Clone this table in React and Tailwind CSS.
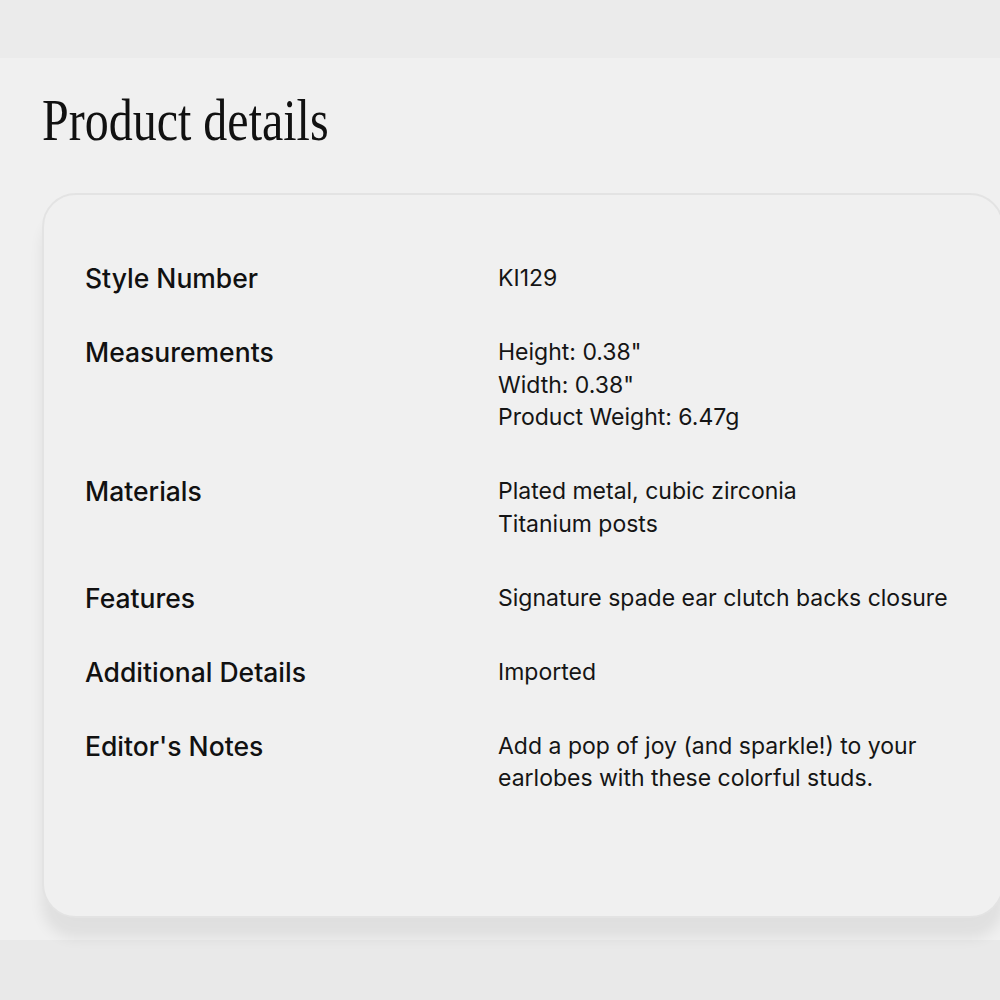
import React from 'react'

const rows = [
  { label: 'Style Number', value: ['KI129'] },
  { label: 'Measurements', value: ['Height: 0.38"', 'Width: 0.38"', 'Product Weight: 6.47g'] },
  { label: 'Materials', value: ['Plated metal, cubic zirconia', 'Titanium posts'] },
  { label: 'Features', value: ['Signature spade ear clutch backs closure'] },
  { label: 'Additional Details', value: ['Imported'] },
  { label: "Editor's Notes", value: ['Add a pop of joy (and sparkle!) to your', 'earlobes with these colorful studs.'] },
]

const App = () => {
  return (
    <div className="min-h-screen bg-[#e9e9e9] overflow-hidden">
      <div className="h-[58px] bg-[#ebebeb]" />
      <div className="h-[882px] bg-[#f0f0f0] pt-[26px] pl-[42px]">
        <h1
          className="text-[60px] leading-[72px] text-[#111] origin-left scale-x-[0.8] whitespace-nowrap"
          style={{ fontFamily: '"Liberation Serif", serif' }}
        >
          Product details
        </h1>
        <div
          className="mt-[37px] w-[962px] h-[725px] rounded-[34px] border-2 border-[#e3e3e3] bg-[#f0f0f0] shadow-[0_20px_14px_rgba(0,0,0,0.07)] pt-[67px] pl-[41px] flex flex-col gap-[41.6px]"
          style={{ fontFamily: 'Inter, "Liberation Sans", sans-serif' }}
        >
          {rows.map((row) => (
            <div key={row.label} className="flex">
              <div className="w-[413px] text-[26.5px] leading-[32.5px] font-[450] text-[#111]">
                {row.label}
              </div>
              <div className="text-[23px] leading-[32.5px] text-[#151515]">
                {row.value.map((v) => (
                  <div key={v}>{v}</div>
                ))}
              </div>
            </div>
          ))}
        </div>
      </div>
    </div>
  )
}

export default App
